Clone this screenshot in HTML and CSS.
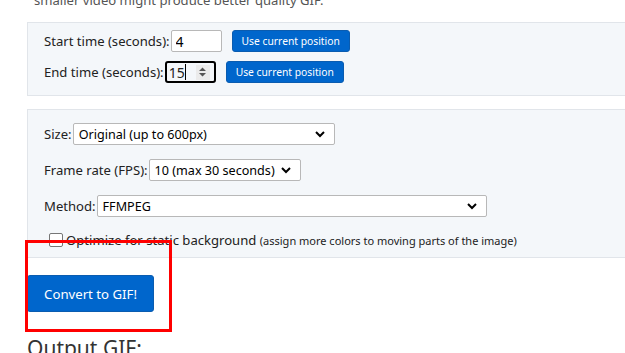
FILE: index.html
```html
<!DOCTYPE html>
<html lang="en">
  <head>
    <meta charset="UTF-8" />
    <meta name="viewport" content="width=device-width, initial-scale=1.0" />
    <title>Video to GIF converter</title>
    <link rel="stylesheet" href="styles.css">
  </head>
  <body>
    <div class="main">
      <p class="hint">smaller video might produce better quality GIF.</p>

      <div class="box box-time">
        <div class="row">
          <label>Start time (seconds):</label>
          <input type="text" class="num" value="4" />
          <button class="btn-small">Use current position</button>
        </div>
        <div class="row">
          <label>End time (seconds):</label>
          <span class="num num-focus">
            <span class="num-val">15<span class="caret"></span></span>
            <span class="spin">
              <svg width="9" height="12" viewBox="0 0 9 12"><path d="M1 5 L4.5 1.5 L8 5 Z M1 7 L4.5 10.5 L8 7 Z" fill="#555"/></svg>
            </span>
          </span>
          <button class="btn-small">Use current position</button>
        </div>
      </div>

      <div class="box box-opts">
        <div class="row">
          <label>Size:</label>
          <span class="select sel-size">Original (up to 600px)
            <svg class="chev" width="10" height="7" viewBox="0 0 10 7"><path d="M1 1 L5 5 L9 1" fill="none" stroke="#000" stroke-width="2"/></svg>
          </span>
        </div>
        <div class="row">
          <label>Frame rate (FPS):</label>
          <span class="select sel-fps">10 (max 30 seconds)
            <svg class="chev" width="10" height="7" viewBox="0 0 10 7"><path d="M1 1 L5 5 L9 1" fill="none" stroke="#000" stroke-width="2"/></svg>
          </span>
        </div>
        <div class="row">
          <label>Method:</label>
          <span class="select sel-method">FFMPEG
            <svg class="chev" width="10" height="7" viewBox="0 0 10 7"><path d="M1 1 L5 5 L9 1" fill="none" stroke="#000" stroke-width="2"/></svg>
          </span>
        </div>
        <div class="row row-check">
          <span class="check"></span>
          <span>Optimize for static background <small>(assign more colors to moving parts of the image)</small></span>
        </div>
      </div>

      <button class="btn-convert">Convert to GIF!</button>

      <h2 class="output">Output GIF:</h2>
    </div>
    <div class="highlight"></div>
  </body>
</html>
```

FILE: styles.css
```css
html {
  overflow: hidden;
}
body {
  margin: 0;
  font-family: "Noto Sans", "Open Sans", sans-serif;
  font-size: 13.1px;
  color: #222;
  background: #fff;
}
.main {
  padding-left: 27px;
  width: 640px;
}
.hint {
  margin: -10px 0 0 7px;
  color: #555;
  line-height: 20px;
}
.box {
  background: #f4f7fa;
  border: 1px solid #e1e5ea;
  padding: 0 16px;
}
.box-time {
  margin-top: 12px;
  height: 74px;
  padding-top: 7px;
  box-sizing: border-box;
}
.box-opts {
  margin-top: 13px;
  padding-top: 13px;
  height: 149px;
  box-sizing: border-box;
}
.row {
  display: flex;
  align-items: center;
  height: 22px;
  margin-bottom: 9px;
}
.box-opts .row {
  margin-bottom: 14px;
}
.box-opts .row:nth-child(3) {
  margin-bottom: 15px;
}
label {
  margin-right: 1px;
}
.num {
  width: 51px;
  height: 22px;
  box-sizing: border-box;
  border: 1px solid #b8b8b8;
  border-radius: 2px;
  font: inherit;
  font-size: 14px;
  padding: 0 4px;
  margin-right: 10px;
}
.num-focus {
  display: flex;
  align-items: center;
  justify-content: space-between;
  border: 2px solid #000;
  border-radius: 3px;
  padding: 0 4px 0 2px;
  width: 51px;
}
.num-val {
  display: flex;
  align-items: center;
}
.caret {
  width: 1px;
  height: 16px;
  background: #000;
}
.spin {
  display: flex;
  align-items: center;
  justify-content: center;
  width: 14px;
  height: 15px;
  background: #ebebeb;
}
.btn-small {
  background: #0066cc;
  color: #fff;
  border: 1px solid #0a5cb0;
  border-radius: 3px;
  font-family: inherit;
  font-size: 10.3px;
  height: 22px;
  padding: 0 9px;
  cursor: pointer;
}
.select {
  position: relative;
  display: flex;
  align-items: center;
  height: 22px;
  box-sizing: border-box;
  background: #fff;
  border: 1px solid #b8b8b8;
  border-radius: 2px;
  padding-left: 5px;
  font-size: 12.6px;
  color: #000;
}
.chev {
  position: absolute;
  right: 9px;
  top: 7px;
}
.sel-size {
  width: 262px;
}
.sel-fps {
  width: 152px;
}
.sel-method {
  width: 390px;
}
.row-check {
  margin-left: 5px;
  margin-top: -3px;
}
.check {
  width: 12px;
  height: 12px;
  border: 1px solid #767676;
  border-radius: 2px;
  background: #fff;
  margin-right: 3px;
}
small {
  font-size: 11px;
}
.btn-convert {
  display: block;
  margin-top: 17px;
  width: 127px;
  height: 37px;
  background: #0066cc;
  color: #fff;
  border: 1px solid #0a5cb0;
  border-radius: 3px;
  font-family: inherit;
  font-size: 13.2px;
  cursor: pointer;
}
.output {
  margin: 22px 0 0;
  font-weight: normal;
  font-size: 21px;
  color: #333;
}
.highlight {
  position: absolute;
  left: 25px;
  top: 240px;
  width: 141px;
  height: 86px;
  border: 3px solid #ff0000;
}
```
